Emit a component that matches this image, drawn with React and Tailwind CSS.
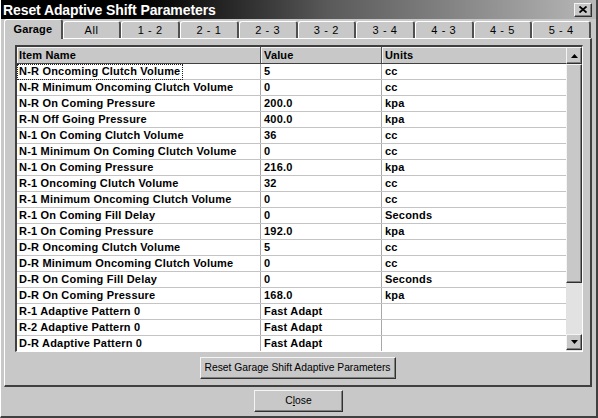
const rows = [
  ["N-R Oncoming Clutch Volume", "5", "cc"],
  ["N-R Minimum Oncoming Clutch Volume", "0", "cc"],
  ["N-R On Coming Pressure", "200.0", "kpa"],
  ["R-N Off Going Pressure", "400.0", "kpa"],
  ["N-1 On Coming Clutch Volume", "36", "cc"],
  ["N-1 Minimum On Coming Clutch Volume", "0", "cc"],
  ["N-1 On Coming Pressure", "216.0", "kpa"],
  ["R-1 Oncoming Clutch Volume", "32", "cc"],
  ["R-1 Minimum Oncoming Clutch Volume", "0", "cc"],
  ["R-1 On Coming Fill Delay", "0", "Seconds"],
  ["R-1 On Coming Pressure", "192.0", "kpa"],
  ["D-R Oncoming Clutch Volume", "5", "cc"],
  ["D-R Minimum Oncoming Clutch Volume", "0", "cc"],
  ["D-R On Coming Fill Delay", "0", "Seconds"],
  ["D-R On Coming Pressure", "168.0", "kpa"],
  ["R-1 Adaptive Pattern 0", "Fast Adapt", ""],
  ["R-2 Adaptive Pattern 0", "Fast Adapt", ""],
  ["D-R Adaptive Pattern 0", "Fast Adapt", ""],
];

const tabs = ["Garage", "All", "1 - 2", "2 - 1", "2 - 3", "3 - 2", "3 - 4", "4 - 3", "4 - 5", "5 - 4"];

const raised =
  "border border-t-[#f4f4f4] border-l-[#f4f4f4] border-r-[#303030] border-b-[#303030] shadow-[inset_-1px_-1px_0_#808080]";

function ScrollBtn({ up, h }) {
  return (
    <div className={`${raised} bg-[#c8c8c8] flex items-center justify-center ${h}`}>
      <svg width="7" height="4" viewBox="0 0 7 4">
        {up ? <path d="M3.5 0 L7 4 L0 4 Z" fill="#000" /> : <path d="M0 0 L7 0 L3.5 4 Z" fill="#000" />}
      </svg>
    </div>
  );
}

export default function App() {
  return (
    <div
      className="w-[598px] h-[418px] bg-[#c8c8c8] flex flex-col overflow-hidden border-l border-l-white border-r-2 border-r-[#404040] border-b-2 border-b-[#404040]"
      style={{ fontFamily: '"Liberation Sans", Arial, sans-serif' }}
    >
      {/* title bar */}
      <div className="h-[19px] flex items-center justify-between pl-[2px] pr-[4px] bg-gradient-to-r from-[#000000] from-[15%] via-[#5a5a5a] via-[55%] to-[#b8b8b8]">
        <span className="text-white font-bold text-[14px] tracking-[-0.1px] leading-none">Reset Adaptive Shift Parameters</span>
        <div className={`${raised} bg-[#c8c8c8] w-[18px] h-[14px] flex items-center justify-center`}>
          <svg width="8" height="7" viewBox="0 0 8 7">
            <path d="M0.5 0.5 L7.5 6.5 M7.5 0.5 L0.5 6.5" stroke="#000" strokeWidth="1.8" />
          </svg>
        </div>
      </div>

      {/* tabs */}
      <div className="h-[19px] flex items-end pl-[3px] pr-[5px] relative z-10">
        {tabs.map((t, i) => {
          const sel = i === 0;
          return (
            <div
              key={t}
              className={`flex-1 flex items-center justify-center rounded-t-[3px] border-t border-l border-t-white border-l-white border-r-2 border-r-[#505050] bg-[#c8c8c8] text-black text-[11px] ${
                sel ? "h-[20px] -mb-[1px] font-bold" : "h-[17px] font-normal"
              }`}
            >
              <span className={sel ? "tracking-[0.1px]" : "tracking-[0.6px]"}>{t}</span>
            </div>
          );
        })}
      </div>

      {/* panel */}
      <div className="ml-[3px] w-[588px] h-[349px] border-t border-l border-t-white border-l-white border-r-2 border-b-2 border-r-[#404040] border-b-[#404040] flex flex-col items-center">
        <div className="mt-[6px] ml-[1px] self-start pl-[9px]">
          <div className="w-[568px] h-[307px] overflow-hidden border-t-2 border-l-2 border-t-[#404040] border-l-[#404040] border-r border-b border-r-white border-b-white flex bg-white">
            <div className="w-[549px] flex flex-col">
              <div className="h-[17px] shrink-0 flex bg-[#c8c8c8] font-bold text-[11px] tracking-[0.15px] text-black border-b border-b-[#404040]">
                <div className="w-[244px] pl-[2px] flex items-center border-r border-r-[#505050] shadow-[inset_1px_1px_0_#f4f4f4]">Item Name</div>
                <div className="w-[121px] pl-[3px] flex items-center border-r border-r-[#505050] shadow-[inset_1px_1px_0_#f4f4f4]">Value</div>
                <div className="w-[184px] pl-[3px] flex items-center shadow-[inset_1px_1px_0_#f4f4f4]">Units</div>
              </div>
              {rows.map((r, i) => (
                <div key={i} className="h-[16px] shrink-0 flex font-bold text-[11px] tracking-[0.2px] text-black border-b border-b-[#c4c4c4]">
                  <div className="w-[244px] flex items-center border-r border-r-[#a8a8a8]">
                    {i === 0 ? (
                      <span className="h-[16px] pl-[1px] pr-[2px] flex items-center border border-dotted border-[#202020]">{r[0]}</span>
                    ) : (
                      <span className="pl-[2px]">{r[0]}</span>
                    )}
                  </div>
                  <div className="w-[121px] pl-[3px] flex items-center border-r border-r-[#a8a8a8]">{r[1]}</div>
                  <div className="w-[184px] pl-[3px] flex items-center">{r[2]}</div>
                </div>
              ))}
            </div>
            <div className="w-[16px] flex flex-col bg-[#e2e2e2]">
              <ScrollBtn up h="h-[17px] shrink-0" />
              <div className={`${raised} bg-[#c8c8c8] h-[219px] shrink-0`} />
              <div className="flex-1" />
              <ScrollBtn h="h-[16px] shrink-0 mb-[1px]" />
            </div>
          </div>
        </div>

        <button
          className={`${raised} mt-[5px] w-[196px] h-[22px] bg-[#c8c8c8] text-[10.3px] text-black flex items-center justify-center`}
        >
          Reset Garage Shift Adaptive Parameters
        </button>
      </div>

      {/* close */}
      <div className="flex justify-center mt-[3px]">
        <button className={`${raised} w-[89px] h-[22px] bg-[#c8c8c8] text-[10.3px] text-black flex items-center justify-center`}>
          <span>
            C<span className="underline">l</span>ose
          </span>
        </button>
      </div>
    </div>
  );
}
